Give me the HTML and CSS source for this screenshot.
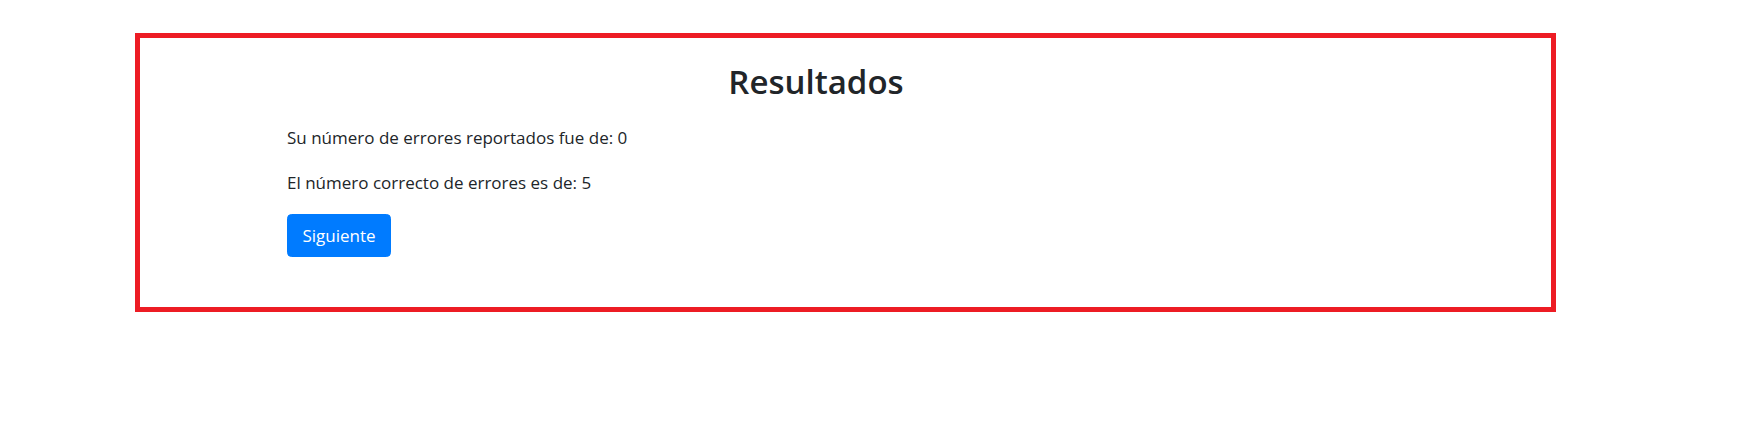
FILE: index.html
```html
<!DOCTYPE html>
<html lang="es">
<head>
<meta charset="utf-8">
<title>Resultados</title>
<link rel="stylesheet" href="styles.css">
</head>
<body>
<div class="frame">
  <div class="content">
    <h2 class="title">Resultados</h2>
    <p class="line">Su número de errores reportados fue de: 0</p>
    <p class="line">El número correcto de errores es de: 5</p>
    <button class="btn" type="button">Siguiente</button>
  </div>
</div>
</body>
</html>
```
FILE: styles.css
```css
* { box-sizing: border-box; }
html, body { margin: 0; padding: 0; background: #fff; }
body {
  font-family: "Open Sans", "Noto Sans", "Liberation Sans", sans-serif;
  color: #212529;
}
.frame {
  margin: 33px 0 0 135px;
  width: 1421px;
  height: 279px;
  border: 5px solid #ed1c24;
  padding: 22px 206px 0 147px;
}
.content {
  display: flex;
  flex-direction: column;
  align-items: flex-start;
}
.title {
  align-self: stretch;
  text-align: center;
  margin: 0 0 21px 0;
  font-size: 33px;
  font-weight: 600;
  line-height: 43px;
}
.line {
  margin: 0 0 18px 0;
  font-size: 17px;
  line-height: 27px;
}
.btn {
  font-family: inherit;
  font-size: 17px;
  line-height: 27px;
  padding: 7px 14px;
  height: 43px;
  width: 104px;
  color: #fff;
  background: #007bff;
  border: 1px solid #007bff;
  border-radius: 4.5px;
}
```
